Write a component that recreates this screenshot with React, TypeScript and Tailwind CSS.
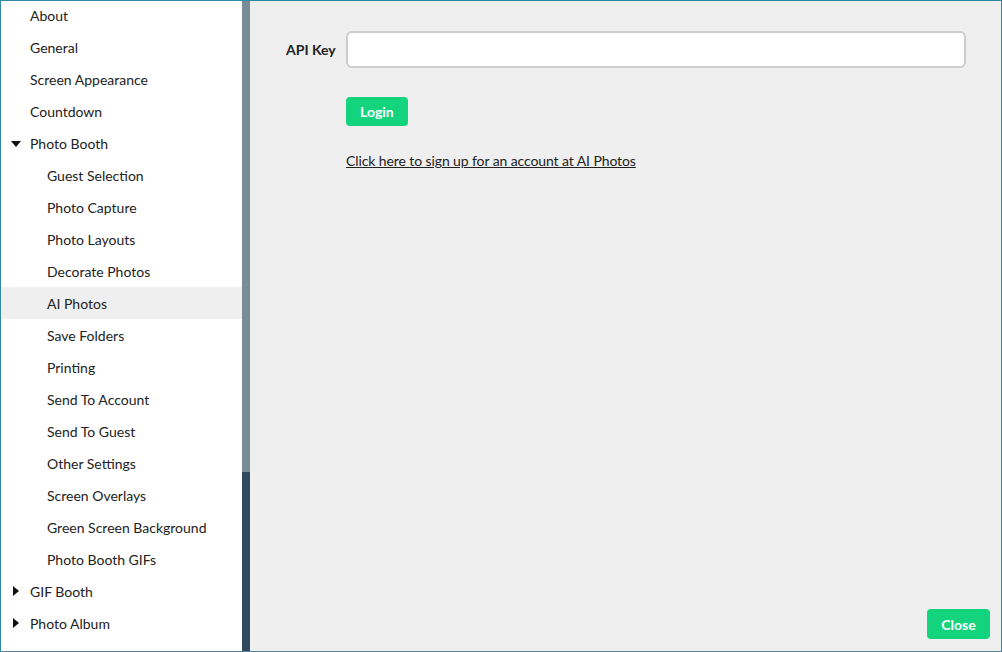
import React from "react";

type Item = { label: string; level: 1 | 2; caret?: "down" | "right"; active?: boolean };

const items: Item[] = [
  { label: "About", level: 1 },
  { label: "General", level: 1 },
  { label: "Screen Appearance", level: 1 },
  { label: "Countdown", level: 1 },
  { label: "Photo Booth", level: 1, caret: "down" },
  { label: "Guest Selection", level: 2 },
  { label: "Photo Capture", level: 2 },
  { label: "Photo Layouts", level: 2 },
  { label: "Decorate Photos", level: 2 },
  { label: "AI Photos", level: 2, active: true },
  { label: "Save Folders", level: 2 },
  { label: "Printing", level: 2 },
  { label: "Send To Account", level: 2 },
  { label: "Send To Guest", level: 2 },
  { label: "Other Settings", level: 2 },
  { label: "Screen Overlays", level: 2 },
  { label: "Green Screen Background", level: 2 },
  { label: "Photo Booth GIFs", level: 2 },
  { label: "GIF Booth", level: 1, caret: "right" },
  { label: "Photo Album", level: 1, caret: "right" },
];

function Caret({ dir }: { dir: "down" | "right" }) {
  if (dir === "down")
    return (
      <svg width="10" height="6" viewBox="0 0 10 6" className="absolute left-[10px] top-[14px]">
        <polygon points="0,0 10,0 5,6" fill="#111" />
      </svg>
    );
  return (
    <svg width="6" height="10" viewBox="0 0 6 10" className="absolute left-[12px] top-[11px]">
      <polygon points="0,0 6,5 0,10" fill="#111" />
    </svg>
  );
}

export default function App() {
  return (
    <div
      className="w-[1002px] h-[652px] flex border border-[#2f8aa6] border-b-[#5a7f95] bg-[#efefef] overflow-hidden text-[#222]"
      style={{ fontFamily: "Lato, 'Noto Sans', sans-serif" }}
    >
      <div className="w-[241px] shrink-0 bg-white -mt-[2px]">
        {items.map((it) => (
          <div
            key={it.label}
            className={`relative h-[32px] flex items-center text-[14px] ${
              it.level === 1 ? "pl-[29px]" : "pl-[46px]"
            } ${it.active ? "bg-[#efefef]" : ""}`}
          >
            {it.caret && <Caret dir={it.caret} />}
            {it.label}
          </div>
        ))}
      </div>
      <div className="w-[8px] shrink-0 flex flex-col">
        <div className="h-[471px] bg-[#7b8c99]" />
        <div className="flex-1 bg-[#2e4960]" />
      </div>
      <div className="flex-1 relative pl-[36px] pt-[30px] pr-[35px]">
        <div className="flex items-center">
          <div className="w-[60px] text-[14px] font-bold">API Key</div>
          <div className="flex-1 h-[37px] bg-white border-2 border-[#cdcdcd] rounded-[6px]" />
        </div>
        <div className="pl-[60px]">
          <button className="mt-[29px] h-[29px] px-[14px] bg-[#13d47c] text-white text-[14px] font-bold rounded-[4px]">
            Login
          </button>
          <div className="mt-[26px] text-[14px] underline leading-[18px] tracking-[-0.1px]">
            Click here to sign up for an account at AI Photos
          </div>
        </div>
        <button className="absolute right-[11px] bottom-[12px] h-[30px] w-[63px] bg-[#13d47c] text-white text-[14px] font-bold rounded-[4px]">
          Close
        </button>
      </div>
    </div>
  );
}
